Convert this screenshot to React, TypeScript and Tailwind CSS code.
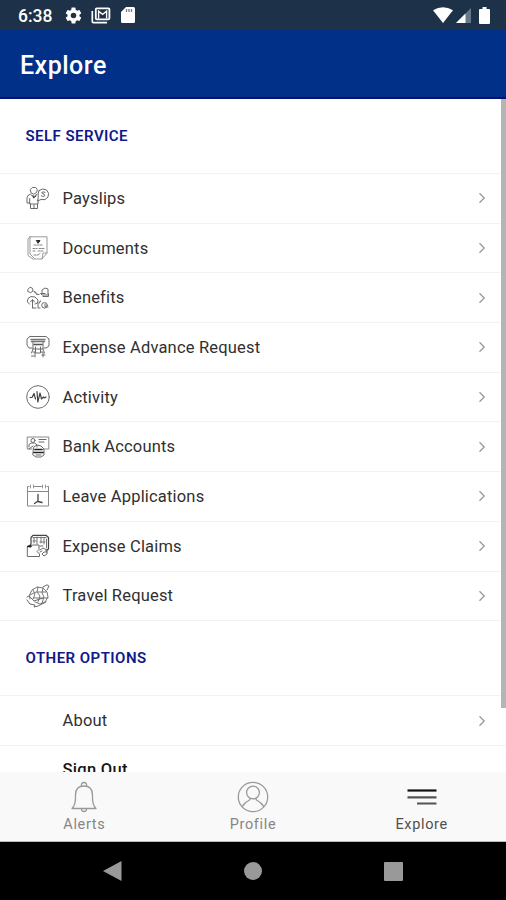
import type { ReactNode } from 'react';

type Item = {
  label: string;
  icon?: ReactNode;
};

function LineIcon({ children }: { children: ReactNode }) {
  return (
    <svg viewBox="0 0 24 24" className="h-6 w-6" fill="none" stroke="#6b6b6b" strokeWidth="1" strokeLinecap="round" strokeLinejoin="round">
      {children}
    </svg>
  );
}

const selfService: Item[] = [
  {
    label: 'Payslips',
    icon: (
      <LineIcon>
        <path d="M5 6.5L4.3 3.5L6.3 1.5H9.7L11.3 3.5L10.5 6.5L8 8Z" />
        <path d="M3.5 17H1V12Q1.2 8.8 4.5 8.2L7.5 11L11 8.2M3.7 12.5V18H12V14M4.5 18V22.5H11.5V18M8 19V22.5" />
        <path d="M7 9.5L7.5 12L10 10" stroke="#333" />
        <path d="M13 4.5Q17 1.5 20.5 4Q24 7 22 11Q19.5 15 15 13.5L11.5 15L12.3 11.5Q11.5 8 13 4.5M19 6.3Q16 4.8 15.7 7Q19 7.8 18.7 9.8Q17 11.5 15.2 9.7" />
      </LineIcon>
    ),
  },
  {
    label: 'Documents',
    icon: (
      <LineIcon>
        <path d="M4 .8H21V17L16 23H7L2 19.5V3L4 .8ZM4 1V18L8 22M21 17H17L16 23" stroke="#999" />
        <path d="M10.7 4.5H14L12.3 7Z" fill="#222" stroke="#222" />
        <path d="M8 9H17M7 12.5H11M13 12.5H18M7 15H10M12 15H18M8 19H12L14 17.5" stroke="#858585" strokeDasharray="2 1" />
      </LineIcon>
    ),
  },
  {
    label: 'Benefits',
    icon: (
      <LineIcon>
        <path d="M2.3 3L4 1.2L6.5 2.3L7 5L4.5 6.7L2 5.5Z" />
        <path d="M8.2 5.5L10 7M10.5 8.2L13 8.5M13 17L14.5 15" strokeWidth="1.2" />
        <path d="M16 7V4L19 2L22 3V9H16L14.5 7.5H19M17 10.5H22.5V8" />
        <path d="M3.5 18L1.3 16L2 12.5L5 10.5L9 11L12 14L11.5 17L9 18M6.5 22V14M4.5 16L6.5 13.5L8.5 16M7 22H10" />
        <circle cx="18.5" cy="19.3" r="2.8" />
        <path d="M12 17V22H14M19 18V21H22" />
      </LineIcon>
    ),
  },
  {
    label: 'Expense Advance Request',
    icon: (
      <LineIcon>
        <path d="M4 1.5H20L23 4V11L20 13H18M6 13H3L1 10V4L4 1.5" />
        <path d="M5 4.5H19M5.5 6.5H18.5" strokeWidth="1.6" stroke="#777" />
        <path d="M7 7V14H17V7" />
        <path d="M8 9.5H16" strokeWidth="1.5" stroke="#555" />
        <path d="M7 14L5.5 18M9.5 12V18H14.5V12M17 14L18.5 18M7 17H9V22M15 17H17V22M5.5 21H8M16 20H19" />
      </LineIcon>
    ),
  },
  {
    label: 'Activity',
    icon: (
      <LineIcon>
        <circle cx="12" cy="12" r="11.3" />
        <path d="M4 12.5H6L8 8.5L9.5 14M11 6.5L11.8 17L14 8L15.5 14L17.5 12L18.5 13L20 12" stroke="#444" strokeWidth="1.2" />
      </LineIcon>
    ),
  },
  {
    label: 'Bank Accounts',
    icon: (
      <LineIcon>
        <path d="M6 14H1.2V2H22.8V14H18" stroke="#888" />
        <circle cx="7" cy="5.5" r="2" />
        <path d="M3 12V9.5L5 8H8.5L11 10V12M13 4.5H20M13 7H18M3 14L7 11M8 12L11 10L15 11L18 14V20L15 22H10L7 20Z" />
        <path d="M9 14.5H16M8 17.5H17" stroke="#222" strokeWidth="1.7" />
        <path d="M10 20H15" />
      </LineIcon>
    ),
  },
  {
    label: 'Leave Applications',
    icon: (
      <LineIcon>
        <path d="M1.5 7.5V2.5H3M8.5 2.5H15.5M21 2.5H22.5V22H1.5V7.5H22.5V3" stroke="#888" />
        <path d="M4.5 1V4M7.5 1V4M16.5 1V4M19.5 1V4" stroke="#999" />
        <path d="M12 10.5V17.5L16 18.5M12 17L8.5 19.5" stroke="#444" strokeWidth="1.3" />
      </LineIcon>
    ),
  },
  {
    label: 'Expense Claims',
    icon: (
      <LineIcon>
        <path d="M5 10V3.5L7 1.3H20L22.5 3.5V15L20 17" stroke="#444" strokeWidth="1.2" />
        <path d="M7 3.5H20M8 4V9M11 3V10M15 3V9M18 4V10M20.5 5V14M7 7H10M14 8H19" stroke="#777" />
        <path d="M1.3 13V22.5H13.5V20L11 17.5L13 15.5V11H6.5L5 13Z" />
        <path d="M1.5 12.5H5V11Z" fill="#222" stroke="#222" />
        <path d="M14 16L17 14L21 16V20L18 22L16 20L18 18H21M14 12H17M16 17L14 18" />
      </LineIcon>
    ),
  },
  {
    label: 'Travel Request',
    icon: (
      <LineIcon>
        <path d="M4 15L3.5 11L6 6L11 3L17 4L21 8L22 13L19 18L14 20L9 18M7 6L9 10L7 15M12 3L11 8L14 12L12 18M17 4L16 9L18 13L16 19M4 11L10 8L20 8M8 14H22" stroke="#777" />
        <path d="M1 13L3 12L8 17L17 14M1 16L4 20L9 21L8 23L12 22L20 18M17 3L21 .8L23 2L21 6" />
      </LineIcon>
    ),
  },
];

const otherOptions: Item[] = [{ label: 'About' }];

function SectionTitle({ children }: { children: ReactNode }) {
  return (
    <h2 className="flex h-[75px] shrink-0 items-center border-b border-[#f3f3f3] pl-[25.5px] text-[15px] font-semibold tracking-[0.46px] text-[#10188a]">
      {children}
    </h2>
  );
}

function Row({ item }: { item: Item }) {
  return (
    <li className="flex h-[49.7px] items-center border-b border-[#f3f3f3] pl-[26px] pr-5">
      <span className="h-6 w-6">{item.icon}</span>
      <span className="ml-[12.5px] flex-1 pt-[2px] text-[16.5px] tracking-[0.18px] text-[#303030]">{item.label}</span>
      <svg viewBox="0 0 8 12" className="h-3 w-2" fill="none" stroke="#999" strokeWidth="1.3">
        <path d="M1.5 1.2L6.2 6L1.5 10.8" />
      </svg>
    </li>
  );
}

function StatusBar() {
  return (
    <div className="flex h-[30px] shrink-0 items-center bg-[#1d3148] pl-[18px] pr-4 text-white">
      <span className="w-[35px] pt-[3px] text-[17.5px] font-medium">6:38</span>
      <svg viewBox="0 0 24 24" className="ml-[11px] h-[19px] w-[19px]" fill="currentColor">
        <path d="M19.43 12.98c.04-.32.07-.64.07-.98s-.03-.66-.07-.98l2.11-1.65c.19-.15.24-.42.12-.64l-2-3.46c-.12-.22-.39-.3-.61-.22l-2.49 1c-.52-.4-1.08-.73-1.69-.98l-.38-2.65A.49.49 0 0014 2h-4c-.25 0-.46.18-.49.42l-.38 2.65c-.61.25-1.17.59-1.69.98l-2.49-1c-.23-.09-.49 0-.61.22l-2 3.46c-.13.22-.07.49.12.64l2.11 1.65c-.04.32-.07.65-.07.98s.03.66.07.98l-2.11 1.65c-.19.15-.24.42-.12.64l2 3.46c.12.22.39.3.61.22l2.49-1c.52.4 1.08.73 1.69.98l.38 2.65c.03.24.24.42.49.42h4c.25 0 .46-.18.49-.42l.38-2.65c.61-.25 1.17-.59 1.69-.98l2.49 1c.23.09.49 0 .61-.22l2-3.46c.12-.22.07-.49-.12-.64l-2.11-1.65zM12 15.5a3.5 3.5 0 110-7 3.5 3.5 0 010 7z" />
      </svg>
      <svg viewBox="0 0 20 17" className="ml-2 h-[17px] w-5" fill="none" stroke="currentColor">
        <path d="M1.3 4V14.5Q1.3 15.7 2.5 15.7H16" strokeWidth="1.7" />
        <rect x="4.8" y="1.3" width="13.6" height="11" rx="1" strokeWidth="1.8" />
        <path d="M7.6 11.5V4.2L11.6 7.3L15.6 4.2V11.5" strokeWidth="1.4" />
      </svg>
      <svg viewBox="0 0 14 16" className="ml-[10px] h-4 w-[14px]">
        <path d="M5 0H12.5Q14 0 14 1.5V14.5Q14 16 12.5 16H1.5Q0 16 0 14.5V5Z" fill="currentColor" />
        <path d="M5.5 2V5M8 2V5M10.5 2V5" stroke="#6c7885" strokeWidth="1.3" />
      </svg>
      <div className="flex-1" />
      <svg viewBox="0 0 20 16" className="mr-px h-4 w-5" fill="currentColor">
        <path d="M0 3.2Q10-2.6 20 3.2L10 16Z" />
      </svg>
      <svg viewBox="0 0 15 16" className="ml-0.5 h-4 w-[15px]">
        <path d="M0 16L15 1V16Z" fill="#687888" />
        <path d="M0 16L9.5 6.5V16Z" fill="currentColor" />
      </svg>
      <svg viewBox="0 0 11 17" className="ml-2 h-[17px] w-[11px]" fill="currentColor">
        <path d="M3.5 0H7.5V2H10Q11 2 11 3V16Q11 17 10 17H1Q0 17 0 16V3Q0 2 1 2H3.5Z" />
      </svg>
    </div>
  );
}

function TabBar() {
  return (
    <nav className="grid h-[70px] shrink-0 grid-cols-3 border-b border-[#bbb] bg-[#f9f9f9] text-[14.5px] leading-4 tracking-[0.65px] text-[#868686]">
      <a className="flex flex-col items-center pt-[9px]">
        <svg viewBox="0 0 28 32" className="h-8 w-7" fill="none" stroke="#999" strokeWidth="1.3" strokeLinejoin="round">
          <path d="M11.5 5Q11 1.5 14 1.5T16.5 5M2 27.5Q5.5 24 5.5 17V14Q5.5 5 14 5T22.5 14V17Q22.5 24 26 27.5ZM11.5 28Q11.5 30.5 14 30.5T16.5 28" />
        </svg>
        <span className="mt-1">Alerts</span>
      </a>
      <a className="flex flex-col items-center pt-[9px]">
        <svg viewBox="0 0 32 32" className="h-8 w-8" fill="none" stroke="#999" strokeWidth="1.3">
          <circle cx="16" cy="16" r="14.7" />
          <circle cx="16" cy="11.5" r="6.4" />
          <path d="M5 25.8Q7.5 21.5 12.5 19L13.3 17.4M18.7 17.4L19.5 19Q24.5 21.5 27 25.8" />
        </svg>
        <span className="mt-1">Profile</span>
      </a>
      <a className="flex flex-col items-center pt-[9px] text-[#505050]">
        <svg viewBox="0 0 30 32" className="h-8 w-[30px]" fill="none" stroke="#555" strokeWidth="2.2">
          <path d="M.5 9.5H29.5" stroke="#111" />
          <path d="M.5 16.4H29.5M10 22.5H29.5" />
        </svg>
        <span className="mt-1">Explore</span>
      </a>
    </nav>
  );
}

export default function App() {
  return (
    <div className="flex h-[900px] w-[506px] flex-col overflow-hidden bg-white font-[Roboto,sans-serif]">
      <StatusBar />
      <header className="flex h-[69px] shrink-0 items-center border-b-2 border-[#06107a] bg-[#003087] pl-5 pt-[5px]">
        <h1 className="text-[25px] font-medium tracking-[0.5px] text-white">Explore</h1>
      </header>

      <main className="flex min-h-0 flex-1 overflow-hidden">
        <div className="-mr-[5px] flex w-[506px] shrink-0 flex-col">
          <SectionTitle>SELF SERVICE</SectionTitle>
          <ul>
            {selfService.map((item) => (
              <Row key={item.label} item={item} />
            ))}
          </ul>
          <SectionTitle>OTHER OPTIONS</SectionTitle>
          <ul>
            {otherOptions.map((item) => (
              <Row key={item.label} item={item} />
            ))}
          </ul>
          <button className="flex h-[49px] shrink-0 items-center pl-[62.5px] text-[16.5px] font-medium tracking-[0.3px] text-[#151515]">
            Sign Out
          </button>
        </div>
        <div className="relative h-[609px] w-[5px] shrink-0 bg-[#b5b5b5]" />
      </main>

      <TabBar />

      <div className="grid h-[58px] shrink-0 grid-cols-[1fr_20px_1fr] items-center bg-black">
        <svg viewBox="0 0 19 20" className="ml-[103px] h-5 w-[19px]" fill="#999">
          <path d="M0 10L18.5 0V20Z" />
        </svg>
        <span className="mx-auto h-[18px] w-[18px] rounded-full bg-[#999]" />
        <span className="ml-[121px] h-[19px] w-[19px] rounded-[1px] bg-[#999]" />
      </div>
    </div>
  );
}
